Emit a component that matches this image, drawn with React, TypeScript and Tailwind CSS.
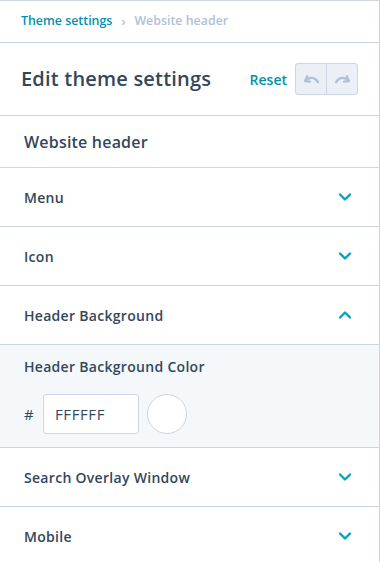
import React from "react";

const Chevron = ({ up }: { up?: boolean }) => (
  <svg width="16" height="16" viewBox="0 0 16 16" fill="none" className="text-[#00a4bd]">
    <path
      d={up ? "M3 10.5 L8 5.5 L13 10.5" : "M3 5.5 L8 10.5 L13 5.5"}
      stroke="currentColor"
      strokeWidth="2.4"
      strokeLinecap="round"
      strokeLinejoin="round"
    />
  </svg>
);

const Row = ({ label, up }: { label: string; up?: boolean }) => (
  <div className="flex items-center justify-between h-[59px] border-b border-[#cbd6e2] pl-[24px] pr-[26px]">
    <span className="text-[14px] font-semibold text-[#33475b] tracking-[0.3px]">{label}</span>
    <Chevron up={up} />
  </div>
);

export default function App() {
  return (
    <div
      className="w-[380px] h-[562px] overflow-hidden bg-white border-t border-r border-[#cbd6e2] text-[#33475b]"
      style={{ fontFamily: '"Open Sans", "Noto Sans", sans-serif' }}
    >
      <div className="h-[42px] flex items-center pl-[21px] border-b border-[#cbd6e2] text-[12.4px] font-semibold">
        <span className="text-[#0091ae]">Theme settings</span>
        <span className="mx-[9px] text-[#b0c1d4] text-[12px]">›</span>
        <span className="text-[#b0c1d4]">Website header</span>
      </div>
      <div className="h-[73px] flex items-center justify-between pl-[21px] pr-[21px] border-b border-[#cbd6e2]">
        <span className="text-[20px] font-semibold text-[#33475b] tracking-[0.2px]">Edit theme settings</span>
        <div className="flex items-center gap-[8px]">
          <span className="text-[14px] font-semibold text-[#0091ae]">Reset</span>
          <div className="flex h-[32px] rounded-[3px] border border-[#cbd6e2] bg-[#eaf0f6]">
            <div className="w-[31px] flex items-center justify-center border-r border-[#cbd6e2]">
              <svg width="17" height="13" viewBox="0 0 16 12" fill="none">
                <path d="M4 3 L2 7.5 L6.5 8" stroke="#b0c1d4" strokeWidth="2.2" strokeLinecap="round" strokeLinejoin="round" />
                <path d="M2.5 7.3 C5 3.5 11 3 14 8.5" stroke="#b0c1d4" strokeWidth="2.2" strokeLinecap="round" fill="none" />
              </svg>
            </div>
            <div className="w-[30px] flex items-center justify-center">
              <svg width="17" height="13" viewBox="0 0 16 12" fill="none">
                <path d="M12 3 L14 7.5 L9.5 8" stroke="#b0c1d4" strokeWidth="2.2" strokeLinecap="round" strokeLinejoin="round" />
                <path d="M13.5 7.3 C11 3.5 5 3 2 8.5" stroke="#b0c1d4" strokeWidth="2.2" strokeLinecap="round" fill="none" />
              </svg>
            </div>
          </div>
        </div>
      </div>
      <div className="h-[52px] flex items-center pl-[24px] border-b border-[#cbd6e2]">
        <span className="text-[16px] font-semibold text-[#33475b] tracking-[0.2px]">Website header</span>
      </div>
      <Row label="Menu" />
      <Row label="Icon" />
      <Row label="Header Background" up />
      <div className="h-[103px] bg-[#f5f8fa] border-b border-[#cbd6e2] pl-[24px] pt-[12px]">
        <div className="text-[14px] font-semibold text-[#33475b] leading-[20px] tracking-[0.3px]">Header Background Color</div>
        <div className="flex items-center mt-[18px] -translate-y-[1px]">
          <span className="text-[15px] text-[#33475b] w-[19px]">#</span>
          <div className="w-[96px] h-[40px] rounded-[3px] border border-[#cbd6e2] bg-white flex items-center pl-[11px] text-[15px] text-[#33475b] tracking-[0.6px]">
            FFFFFF
          </div>
          <div className="ml-[8px] w-[40px] h-[40px] rounded-full border border-[#cbd6e2] bg-white" />
        </div>
      </div>
      <Row label="Search Overlay Window" />
      <Row label="Mobile" />
    </div>
  );
}
